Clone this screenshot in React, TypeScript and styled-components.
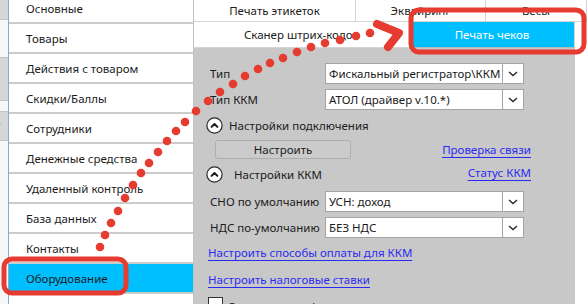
import * as React from "react";
import styled, { createGlobalStyle } from "styled-components";

const GlobalStyle = createGlobalStyle`
  html, body {
    margin: 0;
    padding: 0;
    background: #fff;
    overflow: hidden;
  }
  body {
    font-family: "Noto Sans", "Segoe UI", sans-serif;
    font-size: 11.5px;
    color: #1b1b1b;
  }
`;

const Screen = styled.div`
  position: relative;
  width: 587px;
  height: 304px;
  overflow: hidden;
  display: grid;
  grid-template-columns: 8px 186px 1fr;
  background: #fff;
`;

const BackStrip = styled.div`
  display: flex;
  flex-direction: column;
  overflow: hidden;
`;

const BackBlock = styled.div<{ $h: number; $gray?: boolean }>`
  height: ${(p) => p.$h}px;
  flex-shrink: 0;
  background: ${(p) => (p.$gray ? "#d6d6d6" : "#f7f7f7")};
  border-bottom: 1px solid #c4c4c4;
  line-height: ${(p) => p.$h}px;
  text-indent: -5px;
  white-space: nowrap;
`;

const Menu = styled.div`
  display: flex;
  flex-direction: column;
  border-left: 1px solid #8fa9c6;
  border-right: 1px solid #c2c2c2;
  background: #fff;
  overflow: hidden;
`;

const MenuItem = styled.div<{ $active?: boolean; $first?: boolean }>`
  height: 28px;
  flex-shrink: 0;
  margin-top: ${(p) => (p.$first ? "-6px" : "0")};
  display: flex;
  align-items: center;
  padding-left: 17px;
  background: ${(p) => (p.$active ? "#00bfff" : "#fff")};
  border-bottom: 2px solid #cccccc;
  white-space: nowrap;
`;

const Main = styled.div`
  display: flex;
  flex-direction: column;
  min-width: 0;
`;

const TabRow = styled.div<{ $cols: string; $h: number }>`
  display: grid;
  grid-template-columns: ${(p) => p.$cols};
  height: ${(p) => p.$h}px;
  flex-shrink: 0;
`;

const Tab = styled.div<{ $active?: boolean; $blank?: boolean }>`
  display: flex;
  align-items: center;
  justify-content: center;
  white-space: nowrap;
  overflow: hidden;
  background: ${(p) => (p.$active ? "#00bfff" : "#fff")};
  color: ${(p) => (p.$active ? "#fff" : "#1b1b1b")};
  border-right: ${(p) => (p.$blank ? "none" : "1px solid #d4d4d4")};
  border-bottom: ${(p) =>
    p.$blank ? "none" : p.$active ? "1px solid #b9b9b9" : "1px solid #d4d4d4"};
`;

const Body = styled.div`
  flex: 1;
  display: grid;
  grid-template-columns: 381px 1fr;
`;

const Panel = styled.div`
  background: #c8c8c8;
  padding: 15px 0 0 16px;
  display: flex;
  flex-direction: column;
`;

const FieldRow = styled.div<{ $mt: number }>`
  display: grid;
  grid-template-columns: 115px 199px;
  align-items: center;
  margin-top: ${(p) => p.$mt}px;
`;

const Label = styled.span`
  white-space: nowrap;
`;

const Select = styled.div`
  height: 21px;
  box-sizing: border-box;
  border: 1px solid #a4a4a4;
  background: #fff;
  display: flex;
  align-items: stretch;
`;

const SelectValue = styled.span`
  flex: 1;
  padding-left: 3px;
  display: flex;
  align-items: center;
  white-space: nowrap;
  overflow: hidden;
`;

const SelectArrow = styled.span`
  width: 20px;
  border-left: 1px solid #a4a4a4;
  display: flex;
  align-items: center;
  justify-content: center;
`;

const HeaderRow = styled.div<{ $mt: number }>`
  width: 325px;
  margin-left: -4px;
  margin-top: ${(p) => p.$mt}px;
  height: 18px;
  display: flex;
  align-items: center;
  justify-content: space-between;
`;

const HeaderTitle = styled.div<{ $gap: number }>`
  display: flex;
  align-items: center;
  gap: ${(p) => p.$gap}px;
  white-space: nowrap;
`;

const ButtonRow = styled.div<{ $mt: number }>`
  width: 321px;
  margin-top: ${(p) => p.$mt}px;
  display: flex;
  align-items: center;
  justify-content: space-between;
`;

const FlatButton = styled.div`
  margin-left: 5px;
  width: 136px;
  height: 19px;
  box-sizing: border-box;
  border: 1px solid #adadad;
  border-radius: 3px;
  background: #cbcbcb;
  display: flex;
  align-items: center;
  justify-content: center;
`;

const Link = styled.a<{ $mt?: number }>`
  color: #2b2bf2;
  text-decoration: underline;
  text-underline-offset: 3px;
  white-space: nowrap;
  margin-top: ${(p) => p.$mt ?? 0}px;
  align-self: flex-start;
  cursor: pointer;
`;

const LinkLine = styled.div<{ $mt: number }>`
  margin-left: -2px;
  margin-top: ${(p) => p.$mt}px;
  height: 18px;
  display: flex;
  align-items: center;
`;

const CheckRow = styled.div<{ $mt: number }>`
  margin-left: -2px;
  margin-top: ${(p) => p.$mt}px;
  display: flex;
  align-items: flex-start;
  gap: 6px;
  white-space: nowrap;
`;

const CheckBox = styled.span`
  width: 15px;
  height: 15px;
  box-sizing: border-box;
  border: 1px solid #333;
  background: #fff;
  flex-shrink: 0;
`;

const CheckText = styled.span`
  line-height: 15px;
  margin-top: 2px;
`;

const Overlay = styled.svg`
  position: absolute;
  left: 0;
  top: 0;
  pointer-events: none;
`;

const RED = "#e53b30";

const dots: Array<[number, number]> = [
  [100, 247], [105, 235], [111, 223], [118, 211], [125, 198], [133, 185],
  [141, 173], [149, 163], [158, 152], [167, 141], [176, 131], [185, 122],
  [196, 111], [208, 101], [220, 92], [233, 84], [245, 76], [258, 69],
  [270, 63], [283, 58], [297, 52], [311, 47], [325, 43], [340, 40],
  [356, 36], [370, 33],
];

const menuItems = [
  "Основные",
  "Товары",
  "Действия с товаром",
  "Скидки/Баллы",
  "Сотрудники",
  "Денежные средства",
  "Удаленный контроль",
  "База данных",
  "Контакты",
  "Оборудование",
  "Дополнительно",
];

const CircleUp: React.FC = () => (
  <svg width="17" height="17" viewBox="0 0 17 17">
    <circle cx="8.5" cy="8.5" r="7.6" fill="#fff" stroke="#2a2a2a" strokeWidth="1.2" />
    <path d="M5.6 9.9 L8.5 7 L11.4 9.9" fill="none" stroke="#1a1a1a" strokeWidth="2" strokeLinecap="round" strokeLinejoin="round" />
  </svg>
);

const Chevron: React.FC = () => (
  <svg width="10" height="6" viewBox="0 0 10 6">
    <path d="M1 1 L5 4.6 L9 1" fill="none" stroke="#2a2a2a" strokeWidth="1.4" />
  </svg>
);

const Dropdown: React.FC<{ value: string }> = ({ value }) => (
  <Select>
    <SelectValue>{value}</SelectValue>
    <SelectArrow>
      <Chevron />
    </SelectArrow>
  </Select>
);

const App: React.FC = () => {
  return (
    <>
      <GlobalStyle />
      <Screen>
        <BackStrip>
          <BackBlock $h={19} $gray />
          <BackBlock $h={37} />
          <BackBlock $h={42} $gray />
          <BackBlock $h={10} />
          <BackBlock $h={28} $gray>
            т
          </BackBlock>
          <BackBlock $h={200} />
        </BackStrip>

        <Menu>
          {menuItems.map((item, index) => (
            <MenuItem key={index} $first={index === 0} $active={item === "Оборудование"}>
              {item}
            </MenuItem>
          ))}
        </Menu>

        <Main>
          <TabRow $cols="162px 130px 1fr" $h={22}>
            <Tab>Печать этикеток</Tab>
            <Tab>Эквайринг</Tab>
            <Tab>Весы</Tab>
          </TabRow>
          <TabRow $cols="216px 165px 1fr" $h={26}>
            <Tab>Сканер штрих-кодов</Tab>
            <Tab $active>Печать чеков</Tab>
            <Tab $blank />
          </TabRow>

          <Body>
            <Panel>
              <FieldRow $mt={0}>
                <Label>Тип</Label>
                <Dropdown value="Фискальный регистратор\ККМ" />
              </FieldRow>
              <FieldRow $mt={5}>
                <Label>Тип ККМ</Label>
                <Dropdown value="АТОЛ (драйвер v.10.*)" />
              </FieldRow>

              <HeaderRow $mt={6}>
                <HeaderTitle $gap={6}>
                  <CircleUp />
                  Настройки подключения
                </HeaderTitle>
              </HeaderRow>
              <ButtonRow $mt={6}>
                <FlatButton>Настроить</FlatButton>
                <Link $mt={2}>Проверка связи</Link>
              </ButtonRow>

              <HeaderRow $mt={6}>
                <HeaderTitle $gap={11}>
                  <CircleUp />
                  Настройки ККМ
                </HeaderTitle>
                <Link>Статус ККМ</Link>
              </HeaderRow>

              <FieldRow $mt={8}>
                <Label>СНО по умолчанию</Label>
                <Dropdown value="УСН: доход" />
              </FieldRow>
              <FieldRow $mt={5}>
                <Label>НДС по-умолчанию</Label>
                <Dropdown value="БЕЗ НДС" />
              </FieldRow>

              <LinkLine $mt={7}>
                <Link>Настроить способы оплаты для ККМ</Link>
              </LinkLine>
              <LinkLine $mt={9}>
                <Link>Настроить налоговые ставки</Link>
              </LinkLine>

              <CheckRow $mt={7}>
                <CheckBox />
                <CheckText>Разрешить не фискальные операции</CheckText>
              </CheckRow>
            </Panel>
            <div />
          </Body>
        </Main>

        <Overlay width="587" height="304" viewBox="0 0 587 304">
          <rect x="4" y="259" width="122" height="34" rx="8" fill="none" stroke={RED} strokeWidth="5" />
          <rect x="411" y="10" width="173" height="42" rx="8" fill="none" stroke={RED} strokeWidth="5" />
          {dots.map(([x, y], i) => (
            <circle key={i} cx={x} cy={y} r="4.3" fill={RED} />
          ))}
          <path d="M377 24 L399 33 L388 47" fill="none" stroke={RED} strokeWidth="8" strokeLinecap="round" strokeLinejoin="round" />
        </Overlay>
      </Screen>
    </>
  );
};

export default App;
